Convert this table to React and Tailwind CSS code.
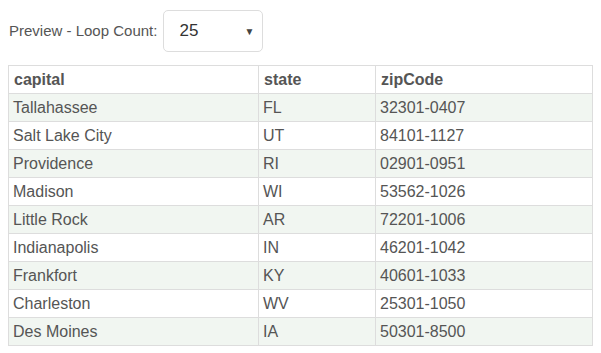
import React from 'react';

const rows = [
    ['Tallahassee', 'FL', '32301-0407'],
    ['Salt Lake City', 'UT', '84101-1127'],
    ['Providence', 'RI', '02901-0951'],
    ['Madison', 'WI', '53562-1026'],
    ['Little Rock', 'AR', '72201-1006'],
    ['Indianapolis', 'IN', '46201-1042'],
    ['Frankfort', 'KY', '40601-1033'],
    ['Charleston', 'WV', '25301-1050'],
    ['Des Moines', 'IA', '50301-8500'],
];

export default function App() {
    return (
        <div className="bg-white px-2 pt-[10px] text-[#555] font-['Liberation_Sans',Arial,sans-serif]">
            <div className="flex items-center">
                <span className="text-[15px] ml-px mr-[6px]">Preview - Loop Count:</span>
                <div className="w-[100px] h-[42px] border border-[#ddd] rounded-[5px] flex items-center justify-between pl-[15px] pr-[8px]">
                    <span className="text-[17px] text-[#333]">25</span>
                    <span className="text-[10px] text-[#444]">▼</span>
                </div>
            </div>
            <table className="mt-[13px] border-collapse text-[16px] w-[584px] table-fixed">
                <colgroup>
                    <col className="w-[250px]" />
                    <col className="w-[117px]" />
                    <col className="w-[217px]" />
                </colgroup>
                <thead>
                    <tr className="h-[28px]">
                        {['capital', 'state', 'zipCode'].map((h) => (
                            <th key={h} className="border border-[#ddd] text-left font-bold px-[5px] py-0 leading-none">
                                {h}
                            </th>
                        ))}
                    </tr>
                </thead>
                <tbody>
                    {rows.map((r, i) => (
                        <tr key={r[0]} className={`h-[28px] ${i % 2 === 0 ? 'bg-[#f1f6f1]' : 'bg-white'}`}>
                            {r.map((c, j) => (
                                <td key={j} className="border border-[#ddd] px-[4px] py-0 leading-none">
                                    {c}
                                </td>
                            ))}
                        </tr>
                    ))}
                </tbody>
            </table>
        </div>
    );
}
